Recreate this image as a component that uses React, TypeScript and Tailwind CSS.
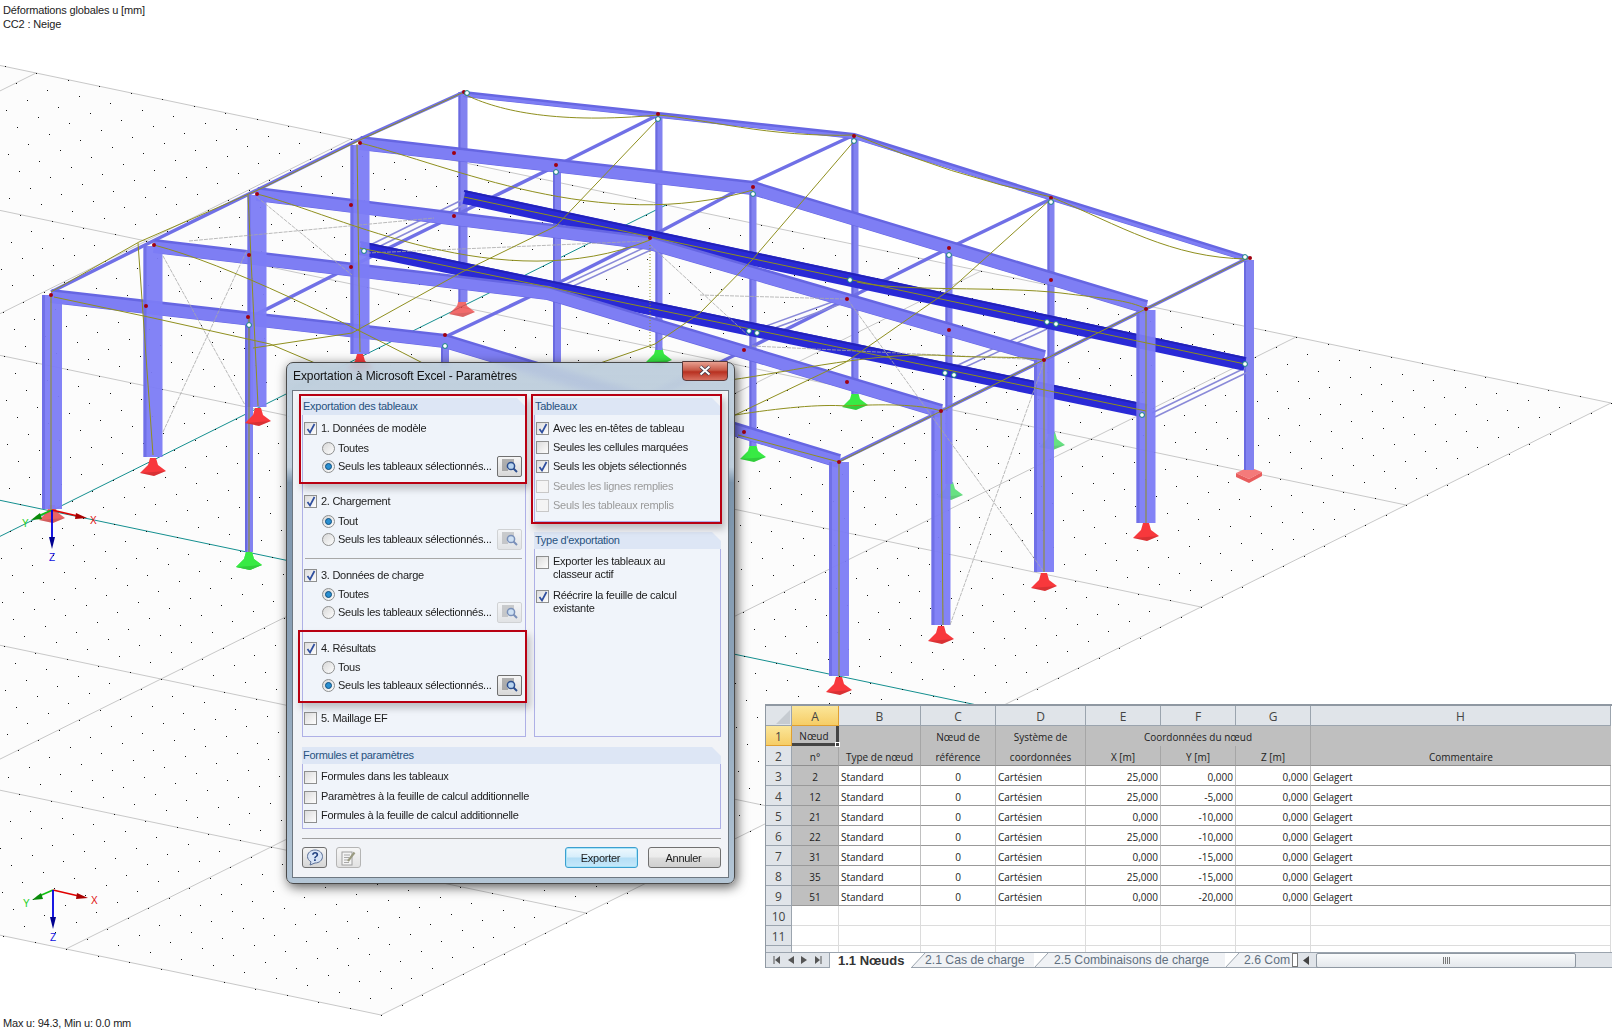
import { ReactNode } from 'react';

// floor lattice: bottom corner of the grid plus the two step vectors
const P = (i: number, j: number) => [381 + i * 31.5 + j * 20.5, 1015 + i * 6.6 - j * 10.2];

const dots = (() => {
  let d = '';
  for (let i = -60; i <= 0; i++) {
    for (let j = 0; j <= 60; j++) {
      const [x, y] = P(i, j);
      if (x < 0 || x > 1614) continue;
      d += `M${Math.round(x)} ${Math.round(y)}h1v1h-1z`;
    }
  }
  return d;
})();

const aLines = [0, 10, 20, 40, 50, 60];
const bLines = [0, -10, -20, -40, -50];

const frames = [
  { l: [464, 94], m: [854, 136], r: [1248, 259], w: 6 },
  { l: [360, 143], m: [753, 188], r: [1146, 307], w: 14 },
  { l: [257, 194], m: [650, 243], r: [1044, 357], w: 14 },
  { l: [154, 246], m: [548, 293], r: [941, 411], w: 14 },
  { l: [51, 296], m: [445, 341], r: [839, 461], w: 14 },
];

const bigColumns = [
  [360, 145, 354, 19],
  [257, 195, 407, 19],
  [153, 246, 457, 19],
  [52, 295, 509, 20],
  [1146, 310, 523, 19],
  [1044, 360, 572, 20],
  [941, 411, 625, 19],
  [839, 462, 676, 20],
];

const thinColumns = [
  [463, 92, 302, 9],
  [659, 118, 350, 7],
  [557, 165, 362, 8],
  [249, 318, 552, 8],
  [445, 340, 366, 8],
  [753, 190, 446, 7],
  [855, 138, 394, 7],
  [949, 250, 484, 7],
  [1051, 199, 434, 7],
  [1249, 260, 470, 10],
];

const crossBeams = [
  'M51 292 L155 240 L257 190 L360 139 L464 92',
  'M249 318 L352 266 L454 216 L556 166 L658 115',
  'M445 337 L548 288 L650 237 L753 182 L854 135',
  'M640 402 L745 350 L847 299 L949 248 L1051 199',
  'M839 461 L941 411 L1044 360 L1146 309 L1248 258',
];

const palePairs = [
  'M362 249 L464 199',
  'M366 253 L468 203',
  'M564 285 L650 245',
  'M567 289 L653 249',
  'M758 329 L846 297',
  'M761 333 L849 301',
  'M956 366 L1044 325',
  'M959 370 L1047 329',
  'M1152 413 L1245 368',
  'M1155 417 L1248 372',
];

const olive = [
  'M464 94 C500 112 560 124 658 115 C700 118 770 138 855 135 Q950 175 1051 197 C1120 225 1170 258 1248 259',
  'M360 143 C450 165 600 235 753 190',
  'M257 194 C340 215 500 300 650 240',
  'M154 245 C230 265 340 320 440 372',
  'M54 297 L153 318 L270 344 L360 382',
  'M51 292 L139 242 L258 190 L360 140 L464 92',
  'M138 243 L153 455',
  'M248 195 L258 406',
  'M357 144 L360 352',
  'M51 295 L51 509',
  'M249 318 L249 552',
  'M658 119 L556 226 L462 272 L352 333 L253 348',
  'M855 140 L752 260 L700 313 L655 344 L580 370',
  'M1051 199 L951 289 L846 362 L735 415',
  'M857 282 C900 292 1000 286 1061 293 C1100 298 1130 300 1146 309',
  'M730 380 C790 372 880 350 951 356 C990 358 1020 356 1044 360',
  'M735 415 C780 408 820 404 846 406 C880 404 920 404 941 411',
  'M738 435 L839 462',
  'M839 462 L1248 258',
  'M839 462 L839 676',
  'M941 411 L943 625',
  'M1044 360 L1044 572',
  'M1146 309 L1146 523',
  'M464 197 L1245 364',
  'M360 248 L1146 411',
];

const greyBraces = [
  'M163 256 L245 405',
  'M163 432 L247 250',
  'M257 197 L352 275',
  'M650 245 L750 337',
  'M848 300 L1044 572',
  'M1044 362 L950 625',
  'M189 241 L434 218',
  'M367 253 L648 241',
  'M700 295 L846 299',
  'M752 346 L1044 360',
];

const redNodes = [
  [51, 295], [146, 306], [248, 317], [445, 335], [154, 245], [249, 255], [351, 267], [257, 194],
  [351, 205], [454, 216], [650, 238], [360, 143], [454, 153], [556, 165], [753, 187], [464, 92],
  [658, 114], [854, 136], [1051, 198], [1250, 258], [949, 248], [1051, 280], [847, 299], [949, 330],
  [744, 350], [847, 382], [744, 432], [1146, 309], [1044, 360], [941, 411], [839, 462],
];

const whiteNodes = [
  [467, 93], [658, 119], [556, 172], [753, 194], [249, 325], [445, 346], [854, 141], [1051, 202],
  [949, 255], [1245, 257], [850, 280], [1047, 322], [1056, 324], [749, 331], [757, 333], [945, 373],
  [954, 375], [1142, 415], [1245, 364], [364, 251],
];

const redSupports = [[153, 458], [258, 408], [360, 354], [1146, 523], [1044, 573], [941, 626], [839, 677]];
const greenSupports = [[249, 552], [659, 347], [753, 444], [855, 392]];
const fadedGreen = [[950, 482], [1052, 432]];

function Support({ x, y, color, opacity = 1 }: { x: number; y: number; color: string; opacity?: number }) {
  return (
    <g opacity={opacity}>
      <polygon
        points={`${x - 3},${y} ${x + 3},${y} ${x + 5},${y + 7} ${x + 13},${y + 13} ${x + 1},${y + 18} ${x - 13},${y + 15} ${x - 5},${y + 7}`}
        fill={color}
      />
      <polygon points={`${x - 13},${y + 15} ${x + 13},${y + 13} ${x + 1},${y + 18}`} fill="#000" opacity="0.12" />
    </g>
  );
}

function Axes({ x, y, labelDy = 0 }: { x: number; y: number; labelDy?: number }) {
  return (
    <g fontFamily="'Liberation Sans', sans-serif" fontSize="10">
      <line x1={x} y1={y} x2={x + 30} y2={y + 7} stroke="#e00000" strokeWidth="1.6" />
      <polygon points={`${x + 24},${y + 3} ${x + 35},${y + 8} ${x + 23},${y + 9}`} fill="#a80000" />
      <line x1={x} y1={y} x2={x - 16} y2={y + 7} stroke="#10c010" strokeWidth="1.6" />
      <polygon points={`${x - 12},${y + 3} ${x - 21},${y + 10} ${x - 10},${y + 9}`} fill="#0a8a0a" />
      <line x1={x} y1={y} x2={x} y2={y + 30} stroke="#0000e0" strokeWidth="1.8" />
      <polygon points={`${x - 3},${y + 27} ${x + 3},${y + 27} ${x},${y + 39}`} fill="#000090" />
      <text x={x + 38} y={y + 14 + labelDy} fill="#e01010">X</text>
      <text x={x - 30} y={y + 17 + labelDy} fill="#20d020">Y</text>
      <text x={x - 3} y={y + 51 + labelDy} fill="#1010e0">Z</text>
    </g>
  );
}

function Structure() {
  return (
    <svg className="absolute inset-0" width="1614" height="1034" viewBox="0 0 1614 1034">
      <polygon points="-1509,619 381,1015 1611,403 -279,7" fill="#fcfcfc" />
      {aLines.map((j) => {
        const [a, b] = [P(-60, j), P(0, j)];
        return <line key={j} x1={a[0]} y1={a[1]} x2={b[0]} y2={b[1]} stroke="#c8c8c8" />;
      })}
      {bLines.map((i) => {
        const [a, b] = [P(i, 0), P(i, 60)];
        return <line key={i} x1={a[0]} y1={a[1]} x2={b[0]} y2={b[1]} stroke="#c8c8c8" />;
      })}
      <line x1={P(-60, 30)[0]} y1={P(-60, 30)[1]} x2={P(0, 30)[0]} y2={P(0, 30)[1]} stroke="#148f8f" />
      <line x1={P(-30, 0)[0]} y1={P(-30, 0)[1]} x2={P(-30, 60)[0]} y2={P(-30, 60)[1]} stroke="#148f8f" />
      <path d={dots} fill="#111" shapeRendering="crispEdges" />

      {fadedGreen.map(([x, y]) => (
        <Support key={x} x={x} y={y} color="#35d85a" opacity={0.75} />
      ))}
      {greenSupports.map(([x, y]) => (
        <Support key={x} x={x} y={y} color="#38ea44" />
      ))}
      <Support x={462} y={299} color="#f04848" opacity={0.8} />
      <polygon points="1236,473 1249,467 1262,472 1249,479" fill="#f47a7a" />
      <polygon points="1236,473 1249,479 1262,472 1262,476 1249,483 1236,477" fill="#e85c5c" />
      <Support x={52} y={505} color="#e84a4a" opacity={0.85} />

      {thinColumns.map(([x, y1, y2, w]) => (
        <g key={`${x}-${y1}`}>
          <rect x={x - w / 2} y={y1} width={w} height={y2 - y1} fill="#8282f0" />
          <rect x={x - w / 2} y={y1} width={2} height={y2 - y1} fill="#6a6ae0" />
        </g>
      ))}

      {crossBeams.map((d) => (
        <path key={d} d={d} fill="none" stroke="#7070e6" strokeWidth="3.5" />
      ))}
      {palePairs.map((d) => (
        <path key={d} d={d} fill="none" stroke="#8a8ad8" strokeWidth="1.5" />
      ))}

      <line x1="464" y1="197" x2="1245" y2="364" stroke="#2a2ad6" strokeWidth="14" />
      <line x1="360" y1="248" x2="1146" y2="411" stroke="#2a2ad6" strokeWidth="14" />
      <line x1="464" y1="191" x2="1245" y2="358" stroke="#2222b8" strokeWidth="2" />
      <line x1="360" y1="242" x2="1146" y2="405" stroke="#2222b8" strokeWidth="2" />

      {frames.map((f) => (
        <g key={f.l[0]} fill="none">
          <polyline
            points={`${f.l[0]},${f.l[1]} ${f.m[0]},${f.m[1]} ${f.r[0]},${f.r[1]}`}
            stroke="#6666e2"
            strokeWidth={f.w}
          />
          <polyline
            points={`${f.l[0]},${f.l[1] + 1} ${f.m[0]},${f.m[1] + 1} ${f.r[0]},${f.r[1] + 1}`}
            stroke="#7e7ef4"
            strokeWidth={f.w - 3}
          />
        </g>
      ))}

      {bigColumns.map(([x, y1, y2, w]) => (
        <g key={`${x}-${y1}`}>
          <rect x={x - w / 2} y={y1} width={w} height={y2 - y1} fill="#7c7cf6" opacity="0.95" />
          <rect x={x - w / 2} y={y1} width={3} height={y2 - y1} fill="#6b6be4" opacity="0.8" />
        </g>
      ))}

      {greyBraces.map((d) => (
        <path key={d} d={d} fill="none" stroke="#a8a8a8" strokeWidth="0.8" strokeDasharray="4 1" />
      ))}
      <line x1="650" y1="245" x2="650" y2="350" stroke="#8e8e20" strokeDasharray="1 2" />
      {olive.map((d) => (
        <path key={d} d={d} fill="none" stroke="#8f8f1e" strokeWidth="1" />
      ))}

      {redSupports.map(([x, y]) => (
        <Support key={x} x={x} y={y} color="#f8383c" />
      ))}
      <Support x={249} y={552} color="#38ea44" />

      {redNodes.map(([x, y]) => (
        <circle key={`${x}-${y}`} cx={x} cy={y} r="2" fill="#a00010" />
      ))}
      {whiteNodes.map(([x, y]) => (
        <circle key={`${x}-${y}`} cx={x} cy={y} r="2.4" fill="#fff" stroke="#108080" strokeWidth="1" />
      ))}

      <Axes x={52} y={510} />
      <Axes x={53} y={890} />
    </svg>
  );
}

function CheckBox({ checked, disabled }: { checked?: boolean; disabled?: boolean }) {
  return (
    <span
      className={`flex h-[13px] w-[13px] shrink-0 items-center justify-center border ${
        disabled ? 'border-[#c8c8c8] bg-[#f4f4f4]' : 'border-[#8e8f8f] bg-[linear-gradient(135deg,#dcdcdc,#fdfdfd)]'
      }`}
    >
      {checked && (
        <svg width="10" height="11" viewBox="0 0 10 11">
          <path d="M1.5 6 L4 9.5 L8.5 1" fill="none" stroke="#2f4f9f" strokeWidth="1.7" />
        </svg>
      )}
    </span>
  );
}

function Radio({ checked }: { checked?: boolean }) {
  return (
    <span className="flex h-[13px] w-[13px] shrink-0 items-center justify-center rounded-full border border-[#8e8f8f] bg-[linear-gradient(135deg,#d8d8d8,#fdfdfd)]">
      {checked && <span className="h-[7px] w-[7px] rounded-full border border-[#0f4f80] bg-[#2a8fd0]" />}
    </span>
  );
}

function SelectButton({ disabled }: { disabled?: boolean }) {
  return (
    <span
      className={`ml-auto flex h-[21px] w-[25px] shrink-0 items-center justify-center rounded-[2px] border bg-[linear-gradient(180deg,#f6f6f6,#d8d8d8)] ${
        disabled ? 'border-[#bcbcbc] opacity-60' : 'border-[#6f6f6f]'
      }`}
    >
      <svg width="19" height="16" viewBox="0 0 19 16">
        <path d="M2 2h12M2 4h12M2 6h6M2 8h5M2 10h5M2 12h6" stroke="#6f6f6f" fill="none" />
        <circle cx="11" cy="8" r="3.6" fill="#b8d4f0" stroke="#2c4f8f" strokeWidth="1.5" />
        <path d="M13.5 10.5 L17 14" stroke="#2c4f8f" strokeWidth="2" />
      </svg>
    </span>
  );
}

function CheckRow({ text, checked, disabled, flat, className = '' }: { text: string; checked?: boolean; disabled?: boolean; flat?: boolean; className?: string }) {
  return (
    <div className={`flex h-[18px] items-center gap-[4px] ${className}`}>
      <CheckBox checked={checked} disabled={disabled} />
      <span className={`${disabled ? 'text-[#9a9a9a]' : ''} ${flat ? 'pb-px' : 'pt-px'}`}>{text}</span>
    </div>
  );
}

function RadioRow({ text, checked, button, disabled, className = '' }: { text: string; checked?: boolean; button?: boolean; disabled?: boolean; className?: string }) {
  return (
    <div className={`flex h-[18px] items-center gap-[3px] pl-[18px] pr-[3px] ${className}`}>
      <Radio checked={checked} />
      <span className="whitespace-nowrap pt-px">{text}</span>
      {button && <SelectButton disabled={disabled} />}
    </div>
  );
}

function Panel({ title, className = '', children }: { title: string; className?: string; children: ReactNode }) {
  return (
    <div className={`flex flex-col ${className}`}>
      <div className="flex h-[17px] items-center bg-[#dde6f5] pl-px text-[#27527f] [clip-path:polygon(0_0,calc(100%-9px)_0,100%_9px,100%_100%,0_100%)]">
        {title}
      </div>
      <div className="flex-1 border-x border-b border-[#aeb0e6] bg-[#f0f4fa] pl-[1px]">{children}</div>
    </div>
  );
}

const SEUL = 'Seuls les tableaux sélectionnés...';

function Dialog() {
  return (
    <div className="absolute left-[286px] top-[362px] h-[522px] w-[449px] rounded-[7px] border border-[#4a4a4a] bg-[#b6c8d8]/80 bg-[linear-gradient(180deg,rgba(190,206,220,0.55)_0%,rgba(190,206,220,0.8)_20%,#7d95ac_23%,#8da3b8_60%,#b4c6d6_100%)] font-['Liberation_Sans',sans-serif] text-[11px] tracking-[-0.27px] text-[#1c1c1c] shadow-[2px_3px_12px_rgba(0,0,0,0.65)] backdrop-blur-[3px]">
      <div className="flex h-[27px] items-center pl-[6px] pr-[6px]">
        <span className="pb-[2px] text-[12px] tracking-[-0.1px] text-[#111]">Exportation à Microsoft Excel - Paramètres</span>
        <span className="relative -top-[6px] ml-auto flex h-[20px] w-[46px] items-center justify-center rounded-b-[4px] border border-[#5a3a3a] bg-[linear-gradient(180deg,#e8a090_0%,#c85a48_45%,#b83020_55%,#d87060_100%)]">
          <svg width="14" height="11" viewBox="0 0 14 11">
            <path d="M2.5 1.5 L11.5 9.5 M11.5 1.5 L2.5 9.5" stroke="#3a3a4a" strokeWidth="3.6" />
            <path d="M2.5 1.5 L11.5 9.5 M11.5 1.5 L2.5 9.5" stroke="#fff" strokeWidth="2" />
          </svg>
        </span>
      </div>

      <div className="mx-[5px] flex h-[488px] flex-col border border-[#6d7781] bg-[#f1f3f7] pl-[9px] pr-[7px] pt-[7px]">
        <div className="flex gap-[8px]">
          <Panel title="Exportation des tableaux" className="h-[339px] w-[224px]">
            <CheckRow text="1. Données de modèle" checked className="mt-[4px]" />
            <RadioRow text="Toutes" className="mt-[2px]" />
            <RadioRow text={SEUL} checked button />
            <CheckRow text="2. Chargement" checked className="mt-[17px]" />
            <RadioRow text="Tout" checked className="mt-[2px]" />
            <RadioRow text={SEUL} button disabled />
            <div className="mx-[1px] mr-[3px] mt-[10px] h-px bg-[#a8a8a8]" />
            <CheckRow text="3. Données de charge" checked className="mt-[7px]" />
            <RadioRow text="Toutes" checked className="mt-[1px]" />
            <RadioRow text={SEUL} button disabled />
            <CheckRow text="4. Résultats" checked className="mt-[18px]" />
            <RadioRow text="Tous" className="mt-[1px]" />
            <RadioRow text={SEUL} checked button />
            <CheckRow text="5. Maillage EF" className="mt-[15px]" />
          </Panel>

          <div className="flex w-[187px] flex-col gap-[10px]">
            <Panel title="Tableaux" className="h-[124px]">
              <CheckRow text="Avec les en-têtes de tableau" checked className="mt-[4px]" />
              <CheckRow text="Seules les cellules marquées" className="mt-px" />
              <CheckRow text="Seuls les objets sélectionnés" checked className="mt-px" />
              <CheckRow text="Seules les lignes remplies" disabled className="mt-[2px]" />
              <CheckRow text="Seuls les tableaux remplis" disabled className="mt-px" />
            </Panel>
            <Panel title="Type d'exportation" className="h-[205px]">
              <div className="mt-[7px] flex items-start gap-[4px]">
                <CheckBox />
                <span className="-mt-px leading-[13px]">
                  Exporter les tableaux au
                  <br />
                  classeur actif
                </span>
              </div>
              <div className="mt-[9px] flex items-start gap-[4px]">
                <CheckBox checked />
                <span className="-mt-px leading-[13px]">
                  Réécrire la feuille de calcul
                  <br />
                  existante
                </span>
              </div>
            </Panel>
          </div>
        </div>

        <Panel title="Formules et paramètres" className="mt-[10px] h-[82px]">
          <CheckRow text="Formules dans les tableaux" flat className="mt-[4px]" />
          <CheckRow text="Paramètres à la feuille de calcul additionnelle" flat className="mt-[2px]" />
          <CheckRow text="Formules à la feuille de calcul additionnelle" flat className="mt-px" />
        </Panel>

        <div className="mt-[9px] h-px bg-[#a0a0a0]" />

        <div className="mt-[8px] flex h-[21px] items-center">
          <span className="flex h-[21px] w-[25px] items-center justify-center rounded-[3px] border border-[#6f6f6f] bg-[linear-gradient(180deg,#f4f4f4,#d6d6d6)]">
            <svg width="18" height="17" viewBox="0 0 18 17">
              <path d="M9 1 C13.5 1 16.5 4 16.5 7.5 C16.5 11 13.5 14 9 14 L4 16 L5 12.8 C2.8 11.5 1.5 9.7 1.5 7.5 C1.5 4 4.5 1 9 1 Z" fill="#d8e4f6" stroke="#5a6f96" />
              <text x="9" y="12" textAnchor="middle" fontSize="12" fontWeight="700" fill="#1f3f7f" fontFamily="'Liberation Sans', sans-serif">?</text>
            </svg>
          </span>
          <span className="ml-[9px] flex h-[21px] w-[25px] items-center justify-center rounded-[3px] border border-[#b4b4b4] bg-[linear-gradient(180deg,#f6f6f6,#e2e2e2)]">
            <svg width="17" height="16" viewBox="0 0 17 16">
              <rect x="2" y="2" width="10" height="13" fill="#f4f4f4" stroke="#a0a0a0" />
              <path d="M4 5h6M4 7.5h5M4 10h4M4 12.5h5" stroke="#a8a8a8" fill="none" />
              <path d="M8 11 L14.5 2.5" stroke="#9a9a80" strokeWidth="2.2" />
            </svg>
          </span>
          <span className="ml-auto flex h-[21px] w-[73px] items-center justify-center rounded-[3px] border border-[#3c9fd0] bg-[linear-gradient(180deg,#eef8fe_0%,#d6eefb_48%,#b4def6_52%,#c6e8fa_100%)] pr-[2px] pt-[2px] shadow-[inset_0_0_0_1px_#a8e4f8]">
            Exporter
          </span>
          <span className="ml-[10px] flex h-[21px] w-[73px] items-center justify-center rounded-[3px] border border-[#707070] bg-[linear-gradient(180deg,#f2f2f2_0%,#ebebeb_48%,#dddddd_52%,#cfcfcf_100%)] pr-[2px] pt-[2px]">
            Annuler
          </span>
        </div>
      </div>

      <div className="absolute left-[12px] top-[31px] h-[90px] w-[228px] border-[2px] border-[#b80012] shadow-[3px_5px_7px_rgba(0,0,0,0.22)]" />
      <div className="absolute left-[244px] top-[31px] h-[130px] w-[191px] border-[2px] border-[#b80012] shadow-[3px_5px_7px_rgba(0,0,0,0.22)]" />
      <div className="absolute left-[11px] top-[267px] h-[73px] w-[229px] border-[2px] border-[#b80012] shadow-[3px_5px_7px_rgba(0,0,0,0.22)]" />
    </div>
  );
}

const columns = ['A', 'B', 'C', 'D', 'E', 'F', 'G', 'H'];

const rows = [
  ['2', '25,000', '0,000'],
  ['12', '25,000', '-5,000'],
  ['21', '0,000', '-10,000'],
  ['22', '25,000', '-10,000'],
  ['31', '0,000', '-15,000'],
  ['35', '25,000', '-15,000'],
  ['51', '0,000', '-20,000'],
];

const headCell = 'flex items-center justify-center border-r border-b border-[#9ba4ae] bg-[#e0e4e9] pt-[2px] text-[12px] text-[#444]';
const orangeCell = 'flex items-center justify-center border-r border-b border-[#e0a030] bg-[linear-gradient(180deg,#fbe69a,#f6cd66)] pt-[2px] text-[12px] text-[#444]';
const greyCell = 'flex items-center justify-center border-r border-[#a6a6a6] bg-[#bfbfbf] pt-[2px]';
const greyBottom = 'flex items-center justify-center border-r border-b border-r-[#a6a6a6] border-b-[#8f8f8f] bg-[#bfbfbf] pt-[2px]';
const dataCell = 'flex items-center border-r border-b border-r-[#c0c0c0] border-b-[#999] px-[2px] pt-[2px]';

function Sheet() {
  return (
    <div className="absolute left-[765px] top-[704px] w-[847px] border-l border-t-2 border-[#8f98a2] bg-white font-['Open_Sans',sans-serif] text-[10px] leading-none text-[#222]">
      <div className="grid grid-cols-[26px_47px_82px_75px_90px_75px_75px_75px_300px] [grid-template-rows:repeat(12,20px)_6px]">
        <div className={headCell}>
          <svg width="14" height="14" viewBox="0 0 14 14" className="ml-[8px]">
            <polygon points="14,0 14,14 0,14" fill="#c6cbd1" />
          </svg>
        </div>
        {columns.map((c, i) => (
          <div key={c} className={i === 0 ? orangeCell : headCell}>
            {c}
          </div>
        ))}

        <div className={orangeCell}>1</div>
        <div className="relative flex items-center justify-center border-b-[3px] border-r-[3px] border-[#444] bg-[#bfbfbf] pt-[3px]">
          Nœud
          <span className="absolute -bottom-[4px] -right-[4px] h-[5px] w-[5px] border border-white bg-[#444]" />
        </div>
        <div className={greyCell} />
        <div className={greyCell}>Nœud de</div>
        <div className={greyCell}>Système de</div>
        <div className={`${greyCell} col-span-3`}>Coordonnées du nœud</div>
        <div className="bg-[#bfbfbf]" />

        <div className={headCell}>2</div>
        <div className={greyBottom}>n°</div>
        <div className={greyBottom}>Type de nœud</div>
        <div className={greyBottom}>référence</div>
        <div className={greyBottom}>coordonnées</div>
        <div className={greyBottom}>X [m]</div>
        <div className={greyBottom}>Y [m]</div>
        <div className={greyBottom}>Z [m]</div>
        <div className="flex items-center justify-center border-b border-[#8f8f8f] bg-[#bfbfbf] pt-[2px]">Commentaire</div>

        {rows.map((r, i) => (
          <div key={r[0]} className="contents">
            <div className={headCell}>{i + 3}</div>
            <div className="flex items-center justify-center border-r border-b border-r-[#a6a6a6] border-b-[#999] bg-[#bfbfbf] pt-[2px]">{r[0]}</div>
            <div className={dataCell}>Standard</div>
            <div className={`${dataCell} justify-center`}>0</div>
            <div className={dataCell}>Cartésien</div>
            <div className={`${dataCell} justify-end`}>{r[1]}</div>
            <div className={`${dataCell} justify-end`}>{r[2]}</div>
            <div className={`${dataCell} justify-end`}>0,000</div>
            <div className={dataCell}>Gelagert</div>
          </div>
        ))}

        {[10, 11].map((n) => (
          <div key={n} className="contents">
            <div className={headCell}>{n}</div>
            {columns.map((c) => (
              <div key={c} className="border-r border-b border-[#dcdcdc]" />
            ))}
          </div>
        ))}
        <div className="border-r border-[#9ba4ae] bg-[#e0e4e9]" />
        {columns.map((c) => (
          <div key={c} className="border-r border-[#dcdcdc]" />
        ))}
      </div>

      <div className="flex h-[16px] border-t border-[#9ba4ae] font-['Liberation_Sans',sans-serif] text-[12.2px]">
        <div className="flex w-[64px] items-center justify-around border-r border-b border-[#9ba4ae] bg-[#e0e4e9] px-[3px]">
          <svg width="7" height="8" viewBox="0 0 7 8"><path d="M1 0v8" stroke="#555" /><polygon points="7,0 7,8 2,4" fill="#555" /></svg>
          <svg width="6" height="8" viewBox="0 0 6 8"><polygon points="6,0 6,8 0,4" fill="#555" /></svg>
          <svg width="6" height="8" viewBox="0 0 6 8"><polygon points="0,0 0,8 6,4" fill="#555" /></svg>
          <svg width="7" height="8" viewBox="0 0 7 8"><path d="M6 0v8" stroke="#555" /><polygon points="0,0 0,8 5,4" fill="#555" /></svg>
        </div>
        <div className="flex w-[462px] overflow-hidden">
          <div className="w-[81px] shrink-0 pl-[8px] text-[13px] font-bold leading-[15px] text-[#333]">1.1 Nœuds</div>
          {[
            ['2.1 Cas de charge', 'w-[123px] pl-[14px]'],
            ['2.5 Combinaisons de charge', 'w-[191px] pl-[20px]'],
            ['2.6 Com', 'w-[67px] pl-[19px]'],
          ].map(([label, cls]) => (
            <div key={label} className={`relative shrink-0 overflow-hidden whitespace-nowrap border-b border-[#9ba4ae] bg-[#f0f2f5] leading-[15px] text-[#5f6f80] ${cls}`}>
              <svg width="15" height="15" viewBox="0 0 15 15" className="absolute left-0 top-0">
                <polygon points="0,15 14,0 0,0" fill="#fff" />
                <line x1="0" y1="15" x2="14" y2="0" stroke="#9ba4ae" />
              </svg>
              {label}
            </div>
          ))}
        </div>
        <div className="flex flex-1 items-center border-b border-[#9ba4ae] bg-[#e0e4e9]">
          <span className="mr-[5px] h-[14px] w-[6px] border border-[#777] bg-white" />
          <svg width="6" height="9" viewBox="0 0 6 9" className="mr-[7px]"><polygon points="6,0 6,9 0,4.5" fill="#444" /></svg>
          <div className="flex h-[15px] w-[260px] items-center justify-center rounded-[2px] border border-[#8f98a2] bg-[linear-gradient(180deg,#fafbfc,#e4e8ec)]">
            <svg width="7" height="7" viewBox="0 0 7 7"><path d="M0.5 0v7M2.5 0v7M4.5 0v7M6.5 0v7" stroke="#777" /></svg>
          </div>
        </div>
      </div>
    </div>
  );
}

export default function App() {
  return (
    <div className="relative h-[1034px] w-[1614px] overflow-hidden bg-white font-['Liberation_Sans',sans-serif] text-[11px] text-[#222]">
      <Structure />
      <div className="absolute left-[3px] top-[3px] leading-[14px] tracking-[-0.15px]">
        <div>Déformations globales u [mm]</div>
        <div>CC2 : Neige</div>
      </div>
      <div className="absolute bottom-[4px] left-[3px] leading-[14px] tracking-[-0.2px]">Max u: 94.3, Min u: 0.0 mm</div>
      <Dialog />
      <Sheet />
    </div>
  );
}
